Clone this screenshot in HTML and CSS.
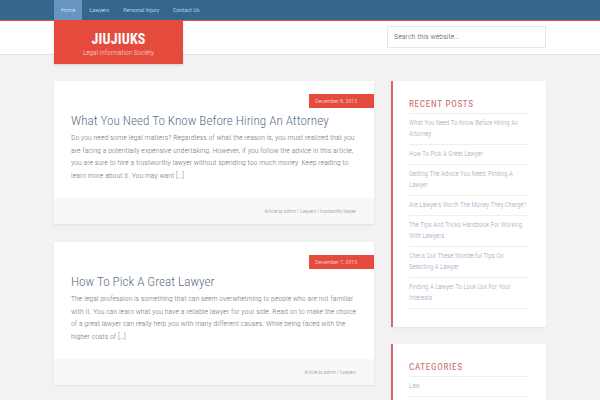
FILE: index.html
```html
<!DOCTYPE html>
<html>
<head>
<meta charset="utf-8">
<link rel="stylesheet" href="styles.css">
</head>
<body>
<nav class="topnav">
  <ul class="wrap menu">
    <li class="active">Home</li>
    <li>Lawyers</li>
    <li>Personal Injury</li>
    <li>Contact Us</li>
  </ul>
</nav>
<header class="site-header">
  <div class="wrap header-inner">
    <div class="logo">
      <div class="logo-title">JIUJIUKS</div>
      <div class="logo-desc">Legal Information Society</div>
    </div>
    <div class="search">Search this website…</div>
  </div>
</header>
<div class="wrap content">
  <main class="posts">
    <article class="post">
      <div class="post-body">
        <div class="date"><span>December 8, 2015</span></div>
        <h2 class="post-title">What You Need To Know Before Hiring An Attorney</h2>
        <p class="excerpt">Do you need some legal matters? Regardless of what the reason is, you must realized that you are facing a potentially expensive undertaking. However, if you follow the advice in this article, you are sure to hire a trustworthy lawyer without spending too much money. Keep reading to learn more about it. You may want […]</p>
      </div>
      <footer class="post-meta">Article by admin / Lawyers / trustworthy lawyer</footer>
    </article>
    <article class="post">
      <div class="post-body">
        <div class="date"><span>December 7, 2015</span></div>
        <h2 class="post-title">How To Pick A Great Lawyer</h2>
        <p class="excerpt">The legal profession is something that can seem overwhelming to people who are not familiar with it. You can learn what you have a reliable lawyer for your side. Read on to make the choice of a great lawyer can really help you with many different causes. While being faced with the higher costs of […]</p>
      </div>
      <footer class="post-meta">Article by admin / Lawyers</footer>
    </article>
  </main>
  <aside class="sidebar">
    <section class="widget">
      <h3 class="widget-title">Recent Posts</h3>
      <ul class="widget-list">
        <li>What You Need To Know Before Hiring An Attorney</li>
        <li>How To Pick A Great Lawyer</li>
        <li>Getting The Advice You Need: Finding A Lawyer</li>
        <li>Are Lawyers Worth The Money They Charge?</li>
        <li>The Tips And Tricks Handbook For Working With Lawyers</li>
        <li>Check Out These Wonderful Tips On Selecting A Lawyer</li>
        <li>Finding A Lawyer To Look Out For Your Interests</li>
      </ul>
    </section>
    <section class="widget">
      <h3 class="widget-title">Categories</h3>
      <ul class="widget-list">
        <li>Law</li>
        <li>Lawyers</li>
      </ul>
    </section>
  </aside>
</div>
</body>
</html>
```
FILE: styles.css
```css
* { box-sizing: border-box; }
html, body { margin: 0; padding: 0; }
body {
  background: #f2f2f2;
  font-family: "Roboto Condensed", "Liberation Sans Narrow", Roboto, "Liberation Sans", sans-serif;
  color: #777;
  height: 400px;
  overflow: hidden;
}
.wrap { width: 492px; margin: 0 auto; }

.topnav {
  background: #35678e;
  border-bottom: 1px solid #e5503f;
  height: 21px;
}
.menu {
  list-style: none;
  padding: 0;
  margin: 0 auto;
  display: flex;
  height: 20px;
}
.menu li {
  color: #e6eef5;
  font-size: 6.2px;
  font-weight: 300;
  line-height: 20px;
  padding: 0 7px;
}
.menu li.active { background: #6595c0; }

.site-header {
  background: #fff;
  height: 34px;
  border-bottom: 1px solid #e4e4e4;
}
.header-inner {
  display: flex;
  justify-content: space-between;
  align-items: flex-start;
}
.logo {
  width: 129px;
  height: 43px;
  background: #e54b3c;
  color: #fff;
  text-align: center;
  padding-top: 11px;
  position: relative;
  z-index: 2;
  box-shadow: 0 1px 2px rgba(0,0,0,.15);
}
.logo-title { font-size: 14px; font-weight: 700; line-height: 14px; letter-spacing: 0.2px; }
.logo-desc { font-size: 7.2px; font-weight: 300; line-height: 10px; margin-top: 2px; color: #f8dcd8; }
.search {
  margin-top: 5px;
  width: 159px;
  height: 22px;
  border: 1px solid #e6e6e6;
  font-size: 8px;
  font-weight: 300;
  line-height: 20px;
  padding-left: 6px;
  color: #555;
}

.content {
  display: flex;
  gap: 17px;
  padding-top: 26px;
  align-items: flex-start;
}
.posts { width: 320px; display: flex; flex-direction: column; gap: 18px; }
.post {
  background: #fff;
  box-shadow: 0 1px 2px rgba(0,0,0,.08);
}
.post-body { padding: 13px 0 16px 17px; }
.date { display: flex; justify-content: flex-end; height: 14px; }
.date span {
  background: #e54b3c;
  color: #fbe3e0;
  font-size: 6px;
  font-weight: 300;
  line-height: 14px;
  width: 65px;
  padding-left: 6px;
}
.post-title {
  margin: 4px 0 0;
  font-weight: 300;
  font-size: 13.2px;
  line-height: 17px;
  color: #5b7087;
}
.excerpt {
  margin: 3px 0 0;
  font-size: 7.8px;
  font-weight: 300;
  line-height: 12.5px;
  color: #777;
  padding-right: 15px;
}
.post-meta {
  background: #f8f8f8;
  height: 26px;
  font-size: 5px;
  font-weight: 300;
  line-height: 26px;
  text-align: right;
  padding-right: 18px;
  color: #8a8a8a;
}

.sidebar { width: 155px; display: flex; flex-direction: column; gap: 17px; }
.widget {
  background: #fff;
  border-left: 2px solid #d9666a;
  padding: 17px 18px 18px 16px;
  box-shadow: 0 1px 2px rgba(0,0,0,.06);
}
.widget-title {
  margin: 0;
  font-size: 9.2px;
  line-height: 12px;
  font-weight: 400;
  letter-spacing: 0.7px;
  text-transform: uppercase;
  color: #c8686c;
  padding-bottom: 3px;
  border-bottom: 1px solid #eee;
}
.widget-list { list-style: none; margin: 0; padding: 0; }
.widget-list li {
  font-size: 6.8px;
  font-weight: 300;
  line-height: 11px;
  padding: 4px 0;
  border-bottom: 1px solid #eee;
  color: #96a8bb;
}
```
